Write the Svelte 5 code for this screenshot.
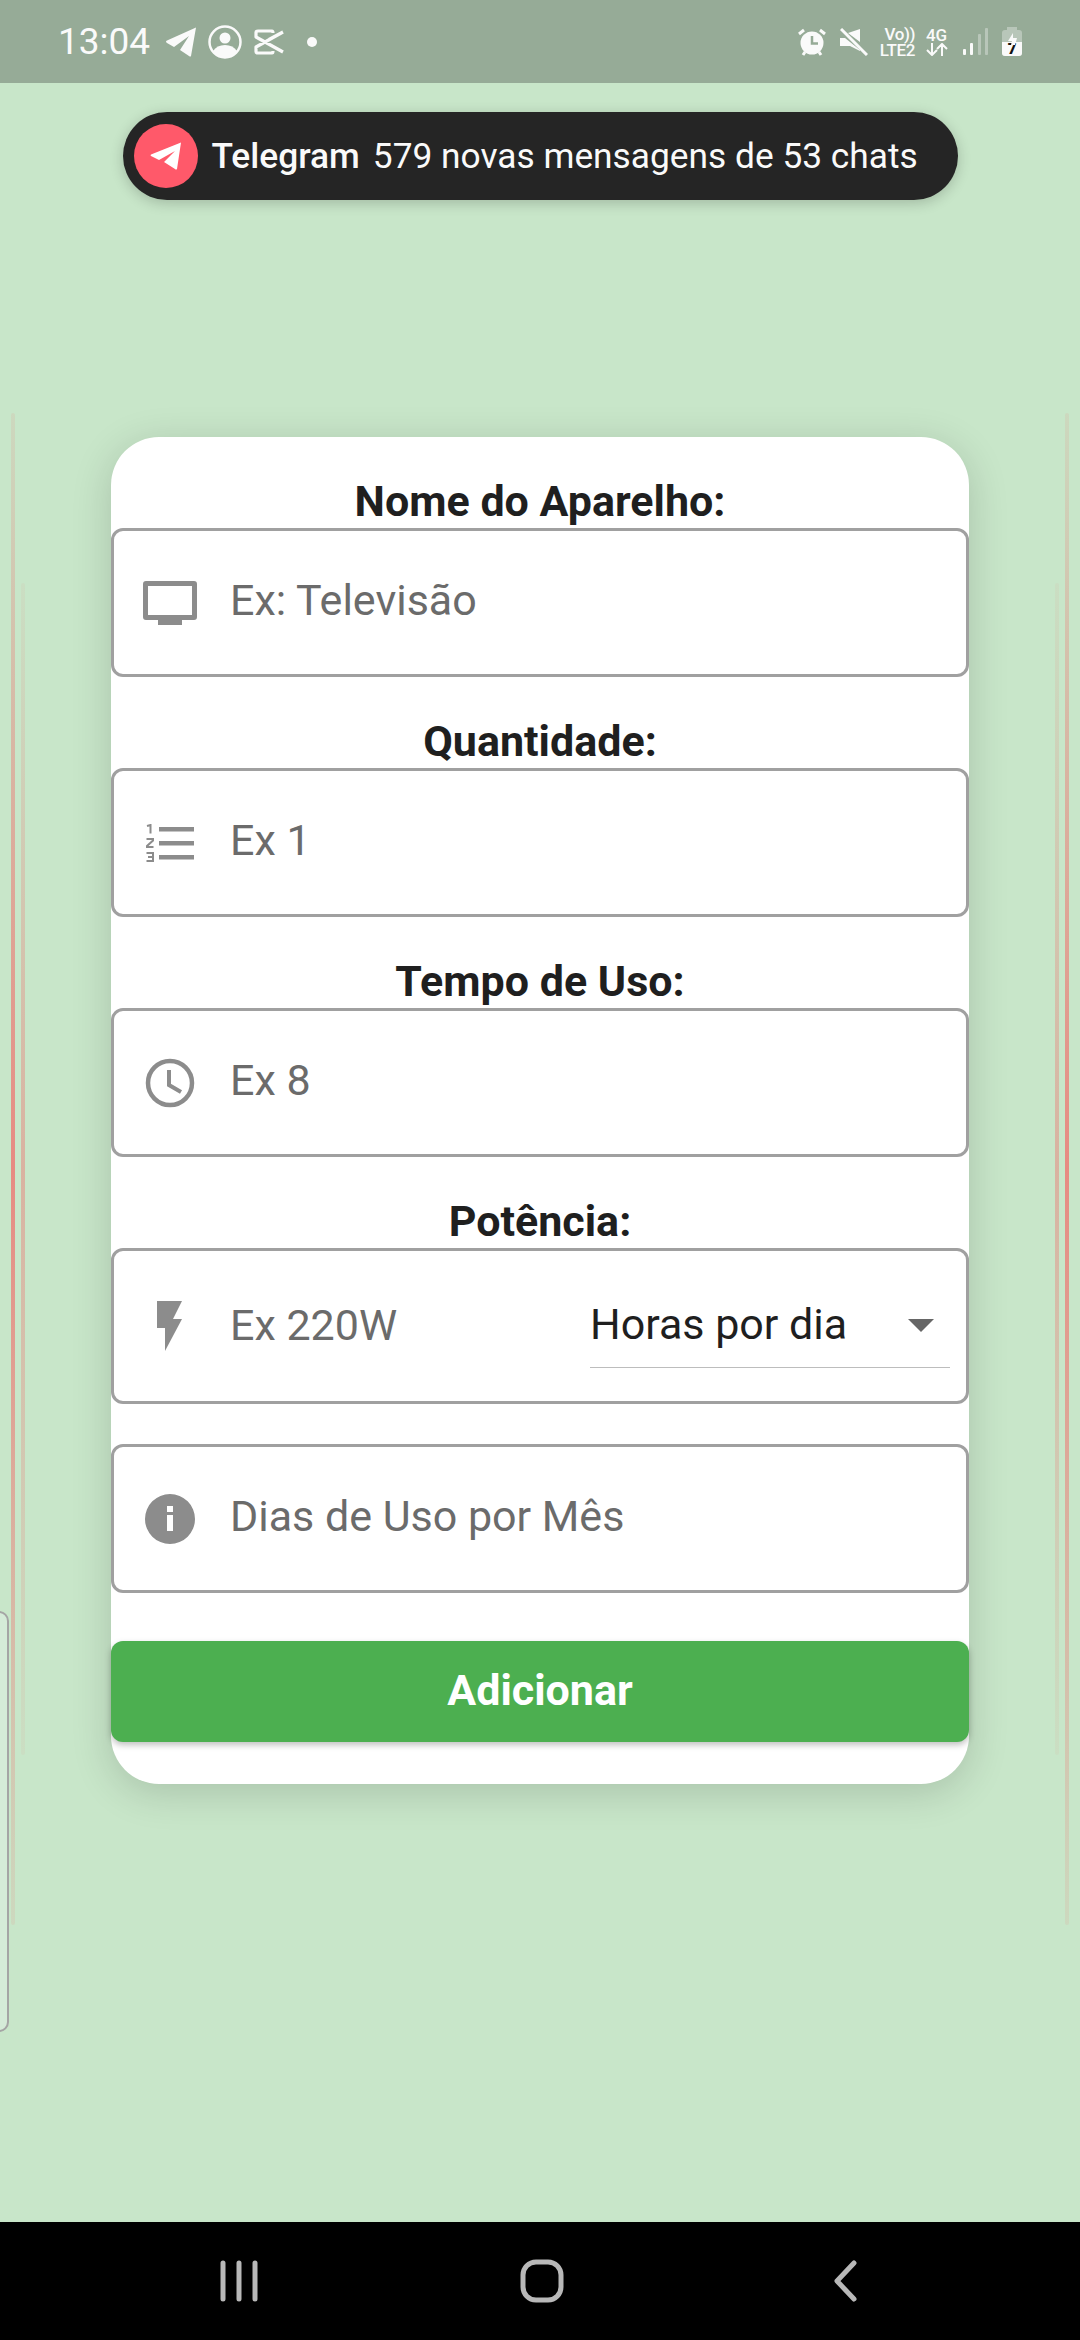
<script>
  const fields = [
    { label: "Nome do Aparelho:", hint: "Ex: Televisão", icon: "tv" },
    { label: "Quantidade:", hint: "Ex 1", icon: "list" },
    { label: "Tempo de Uso:", hint: "Ex 8", icon: "clock" },
    { label: "Potência:", hint: "Ex 220W", icon: "bolt", select: "Horas por dia" },
    { hint: "Dias de Uso por Mês", icon: "info" },
  ];
</script>

<div class="screen">
  <header class="status">
    <span class="time">13:04</span>
    <svg class="ic" width="32" height="30" viewBox="0 0 32 30"><path fill="#fafafa" d="M31 0.5 L26 29 Q25.500 30 24 29 L15 23 L24 9 L9 20 L2 16 Q0 14.500 2 13.500 Z" /></svg>
    <svg class="ic" width="34" height="34" viewBox="0 0 34 34"><circle cx="17" cy="17" r="15.500" fill="none" stroke="#fafafa" stroke-width="2.500" /><circle cx="17" cy="13" r="5.500" fill="#fafafa" /><path fill="#fafafa" d="M5 26 Q9 20 17 20 Q25 20 29 26 Q24 33 17 33 Q10 33 5 26 Z" /></svg>
    <svg class="ic" width="32" height="26" viewBox="0 0 32 26"><path fill="none" stroke="#fafafa" stroke-width="3.200" stroke-linejoin="round" d="M30 3 L16 10.500 M30 23 L3 8 V3.500 Q3 2 5 2 H19 Q20 2 20 4 M30 3 L3 18 V22.500 Q3 24 5 24 H19 Q20 24 20 22" /></svg>
    <span class="dot"></span>

    <div class="status-right">
      <svg width="28" height="28" viewBox="0 0 28 28"><circle cx="14" cy="15" r="11.500" fill="#fafafa" /><path fill="none" stroke="#96ab97" stroke-width="2.500" d="M14 8 V15.500 H20" /><path fill="none" stroke="#fafafa" stroke-width="3" d="M1 6 L6 2 M27 6 L22 2 M5 27 L7 24 M23 27 L21 24" /></svg>
      <svg class="mute" width="28" height="28" viewBox="0 0 28 28"><path fill="#fafafa" d="M20 1 V14 L8 5 Z M0 10 H5 L20 22 V23 L10 18 H0 Z" /><path stroke="#fafafa" stroke-width="3" d="M1 1 L27 27" /></svg>
      <div class="volte"><span>Vo))</span><span>LTE2</span></div>
      <div class="net">
        <span>4G</span>
        <svg width="22" height="13" viewBox="0 0 22 13"><path fill="none" stroke="#fafafa" stroke-width="2" d="M6 0 V12 M1 7 L6 12 L11 7 M16 13 V1 M11 6 L16 1 L21 6" /></svg>
      </div>
      <div class="bars"><i class="b1"></i><i class="b2"></i><i class="b3"></i><i class="b4"></i></div>
      <div class="battery">
        <span class="cap"></span>
        <svg class="charge" width="12" height="12" viewBox="0 0 12 12"><path fill="#fafafa" d="M7 0 L2 8 H6 L5 12 H9 L11 5 H7 Z" /></svg>
        <span class="level">7</span>
      </div>
    </div>
  </header>

  <main class="body">
    <div class="stripe s1"></div>
    <div class="stripe s2"></div>
    <div class="stripe s3"></div>
    <div class="stripe s4"></div>
    <div class="ghost"></div>

    <div class="toast">
      <span class="badge">
        <svg width="32" height="28" viewBox="0 0 32 28"><path fill="#fff" d="M31 0.500 L27 27 Q26 28 25 27 L14 20 L25 9 L9 18 L1 14 Q0 13 1 12.500 Z" /></svg>
      </span>
      <b>Telegram</b>
      <span>579 novas mensagens de 53 chats</span>
    </div>

    <section class="card">
      {#each fields as f}
        {#if f.label}
          <div class="label">{f.label}</div>
        {/if}
        <div class="field" class:tall={f.select}>
          <span class="icon">
            {#if f.icon === "tv"}
              <svg width="54" height="44" viewBox="0 0 54 44"><path fill="#8c8c8c" d="M3 0 H51 Q54 0 54 3 V36 Q54 39 51 39 H39 V44 H15 V39 H3 Q0 39 0 36 V3 Q0 0 3 0 Z M5 5 V34 H49 V5 Z" /></svg>
            {:else if f.icon === "list"}
              <svg width="48" height="38" viewBox="0 0 48 38"><path fill="#8c8c8c" d="M13 3 H48 V7.500 H13 Z M13 17 H48 V21.500 H13 Z M13 31 H48 V35.500 H13 Z" /><path fill="none" stroke="#8c8c8c" stroke-width="2" d="M1 2 L4.500 1 V9.500 M0.500 15 H7 V16.500 L1 22 V23 H7.500 M0.500 29 H7 V37 H0.500 M2 33 H7" /></svg>
            {:else if f.icon === "clock"}
              <svg width="50" height="50" viewBox="0 0 50 50"><circle cx="25" cy="25" r="22" fill="none" stroke="#8c8c8c" stroke-width="4.500" /><path fill="none" stroke="#8c8c8c" stroke-width="4" d="M24 12 V27 L36 34" /></svg>
            {:else if f.icon === "bolt"}
              <svg width="26" height="50" viewBox="0 0 26 50"><path fill="#8c8c8c" d="M0 0 H25 L16 18 H25 L8 50 V27 H0 Z" /></svg>
            {:else}
              <svg width="50" height="50" viewBox="0 0 50 50"><path fill="#8c8c8c" fill-rule="evenodd" d="M25 0 A25 25 0 1 1 25 50 A25 25 0 1 1 25 0 Z M22 21 V37 H28 V21 Z M22 12 V18 H28 V12 Z" /></svg>
            {/if}
          </span>
          <span class="hint">{f.hint}</span>
          {#if f.select}
            <div class="select">
              <span class="chosen">{f.select}</span>
              <i class="caret"></i>
            </div>
          {/if}
        </div>
      {/each}

      <button class="add">Adicionar</button>
    </section>
  </main>

  <footer class="nav">
    <svg width="40" height="42" viewBox="0 0 40 42"><path stroke="#b8b8b8" stroke-width="5" stroke-linecap="round" d="M3 3 V39 M19 3 V39 M35 3 V39" /></svg>
    <svg class="home" width="44" height="44" viewBox="0 0 44 44"><rect x="3" y="3" width="38" height="38" rx="13" fill="none" stroke="#b8b8b8" stroke-width="5" /></svg>
    <svg width="26" height="42" viewBox="0 0 26 42"><path fill="none" stroke="#b8b8b8" stroke-width="5" stroke-linecap="round" stroke-linejoin="round" d="M22 3 L5 21 L22 39" /></svg>
  </footer>
</div>

<style>
  :global(body) {
    margin: 0;
    font-family: Roboto, "Liberation Sans", sans-serif;
  }
  .screen {
    width: 1080px;
    height: 2340px;
    display: flex;
    flex-direction: column;
    overflow: hidden;
    background: #c8e6c9;
  }
  .status {
    height: 83px;
    flex: none;
    box-sizing: border-box;
    padding: 0 58px 0 58px;
    display: flex;
    align-items: center;
    background: #96ab97;
    color: #fafafa;
  }
  .time {
    font-size: 37px;
    width: 107px;
  }
  .ic {
    margin-right: 11px;
  }
  .dot {
    width: 10px;
    height: 10px;
    margin-left: 11px;
    border-radius: 50%;
    background: #fafafa;
  }
  .status-right {
    margin-left: auto;
    display: flex;
    align-items: center;
  }
  .mute {
    margin-left: 14px;
  }
  .volte,
  .net {
    display: flex;
    flex-direction: column;
    align-items: center;
    font-size: 17px;
    font-weight: 500;
    line-height: 16px;
  }
  .volte {
    margin-left: 9px;
    width: 38px;
    align-items: flex-end;
    letter-spacing: -0.4px;
  }
  .net {
    margin-left: 10px;
    width: 23px;
  }
  .bars {
    margin-left: 15px;
    width: 25px;
    height: 27px;
    display: flex;
    align-items: flex-end;
    justify-content: space-between;
  }
  .bars i {
    width: 3px;
    background: #fafafa;
    border-radius: 1px;
  }
  .b1 { height: 6px; }
  .b2 { height: 12px; }
  .b3 { height: 21px; opacity: 0.35; }
  .b4 { height: 27px; opacity: 0.35; }
  .battery {
    margin-left: 14px;
    width: 20px;
    height: 26px;
    margin-top: 3px;
    position: relative;
    display: flex;
    align-items: flex-end;
    border-radius: 3px;
    background: rgba(250, 250, 250, 0.35);
  }
  .cap {
    position: absolute;
    top: -3px;
    left: 5px;
    width: 10px;
    height: 3px;
    background: rgba(250, 250, 250, 0.35);
  }
  .charge {
    position: absolute;
    top: 3px;
    left: 4px;
  }
  .level {
    width: 100%;
    height: 14px;
    border-radius: 0 0 3px 3px;
    background: #fafafa;
    color: #111;
    font-size: 15px;
    font-weight: 900;
    line-height: 14px;
    text-align: center;
  }
  .body {
    flex: 1;
    position: relative;
    display: flex;
    flex-direction: column;
    align-items: center;
  }
  .stripe {
    position: absolute;
    width: 4px;
    border-radius: 2px;
    background: linear-gradient(rgba(244, 100, 100, 0.1), rgba(244, 100, 100, 0.7), rgba(244, 100, 100, 0.1));
  }
  .s1 { left: 11px; top: 330px; height: 1512px; }
  .s3 { right: 11px; top: 330px; height: 1512px; }
  .s2,
  .s4 {
    top: 500px;
    height: 1172px;
    background: linear-gradient(rgba(244, 100, 100, 0.06), rgba(244, 100, 100, 0.4), rgba(244, 100, 100, 0.06));
  }
  .s2 { left: 21px; }
  .s4 { right: 21px; }
  .ghost {
    position: absolute;
    left: -20px;
    top: 1528px;
    width: 29px;
    height: 421px;
    box-sizing: border-box;
    border: 2px solid #a5a5a5;
    border-radius: 10px;
    background: #d5ebd8;
  }
  .toast {
    margin-top: 29px;
    width: 835px;
    height: 88px;
    box-sizing: border-box;
    padding-left: 11px;
    display: flex;
    align-items: center;
    border-radius: 44px;
    background: #252525;
    color: #fafafa;
    font-size: 35.3px;
    box-shadow: 0 3px 14px rgba(0, 0, 0, 0.2);
    z-index: 1;
  }
  .toast b {
    margin: 0 13px 0 14px;
    font-weight: 500;
  }
  .badge {
    width: 64px;
    height: 64px;
    display: flex;
    align-items: center;
    justify-content: center;
    border-radius: 50%;
    background: #ff596a;
  }
  .card {
    margin-top: 237px;
    width: 858px;
    box-sizing: border-box;
    padding: 38px 0 42px;
    display: flex;
    flex-direction: column;
    border-radius: 48px;
    background: #fff;
    box-shadow: 0 8px 40px rgba(0, 0, 0, 0.16);
    z-index: 1;
  }
  .label {
    height: 53px;
    text-align: center;
    font-size: 43px;
    font-weight: 700;
    line-height: 52px;
    color: #1f1f1f;
  }
  .field {
    height: 149px;
    margin-bottom: 38px;
    box-sizing: border-box;
    padding-left: 29px;
    display: flex;
    align-items: center;
    border: 3px solid #a0a0a0;
    border-radius: 12px;
  }
  .field.tall {
    height: 156px;
    margin-bottom: 40px;
  }
  .icon {
    width: 54px;
    height: 54px;
    margin-right: 33px;
    flex: none;
    display: flex;
    align-items: center;
    justify-content: center;
  }
  .hint {
    margin-bottom: 5px;
    font-size: 43px;
    color: #6b6b6b;
  }
  .tall .hint {
    margin-bottom: 3px;
  }
  .select {
    margin-left: auto;
    margin-right: 16px;
    width: 360px;
    height: 83px;
    box-sizing: border-box;
    padding: 0 16px 0 0;
    display: flex;
    align-items: center;
    justify-content: space-between;
    border-bottom: 1px solid #bdbdbd;
    font-size: 43px;
    color: #1f1f1f;
  }
  .chosen {
    margin-bottom: 3px;
  }
  .caret {
    width: 0;
    height: 0;
    border-left: 13px solid transparent;
    border-right: 13px solid transparent;
    border-top: 13px solid #666;
  }
  .add {
    margin-top: 10px;
    height: 101px;
    padding: 0 0 3px;
    border: 0;
    border-radius: 12px;
    background: #4caf50;
    color: #fff;
    font-family: inherit;
    font-size: 43px;
    font-weight: 700;
    box-shadow: 0 3px 6px rgba(0, 0, 0, 0.25);
  }
  .nav {
    height: 118px;
    flex: none;
    box-sizing: border-box;
    padding: 0 222px 0 220px;
    display: flex;
    align-items: center;
    justify-content: space-between;
    background: #000;
  }
  .home {
    margin-right: 8px;
  }
</style>
